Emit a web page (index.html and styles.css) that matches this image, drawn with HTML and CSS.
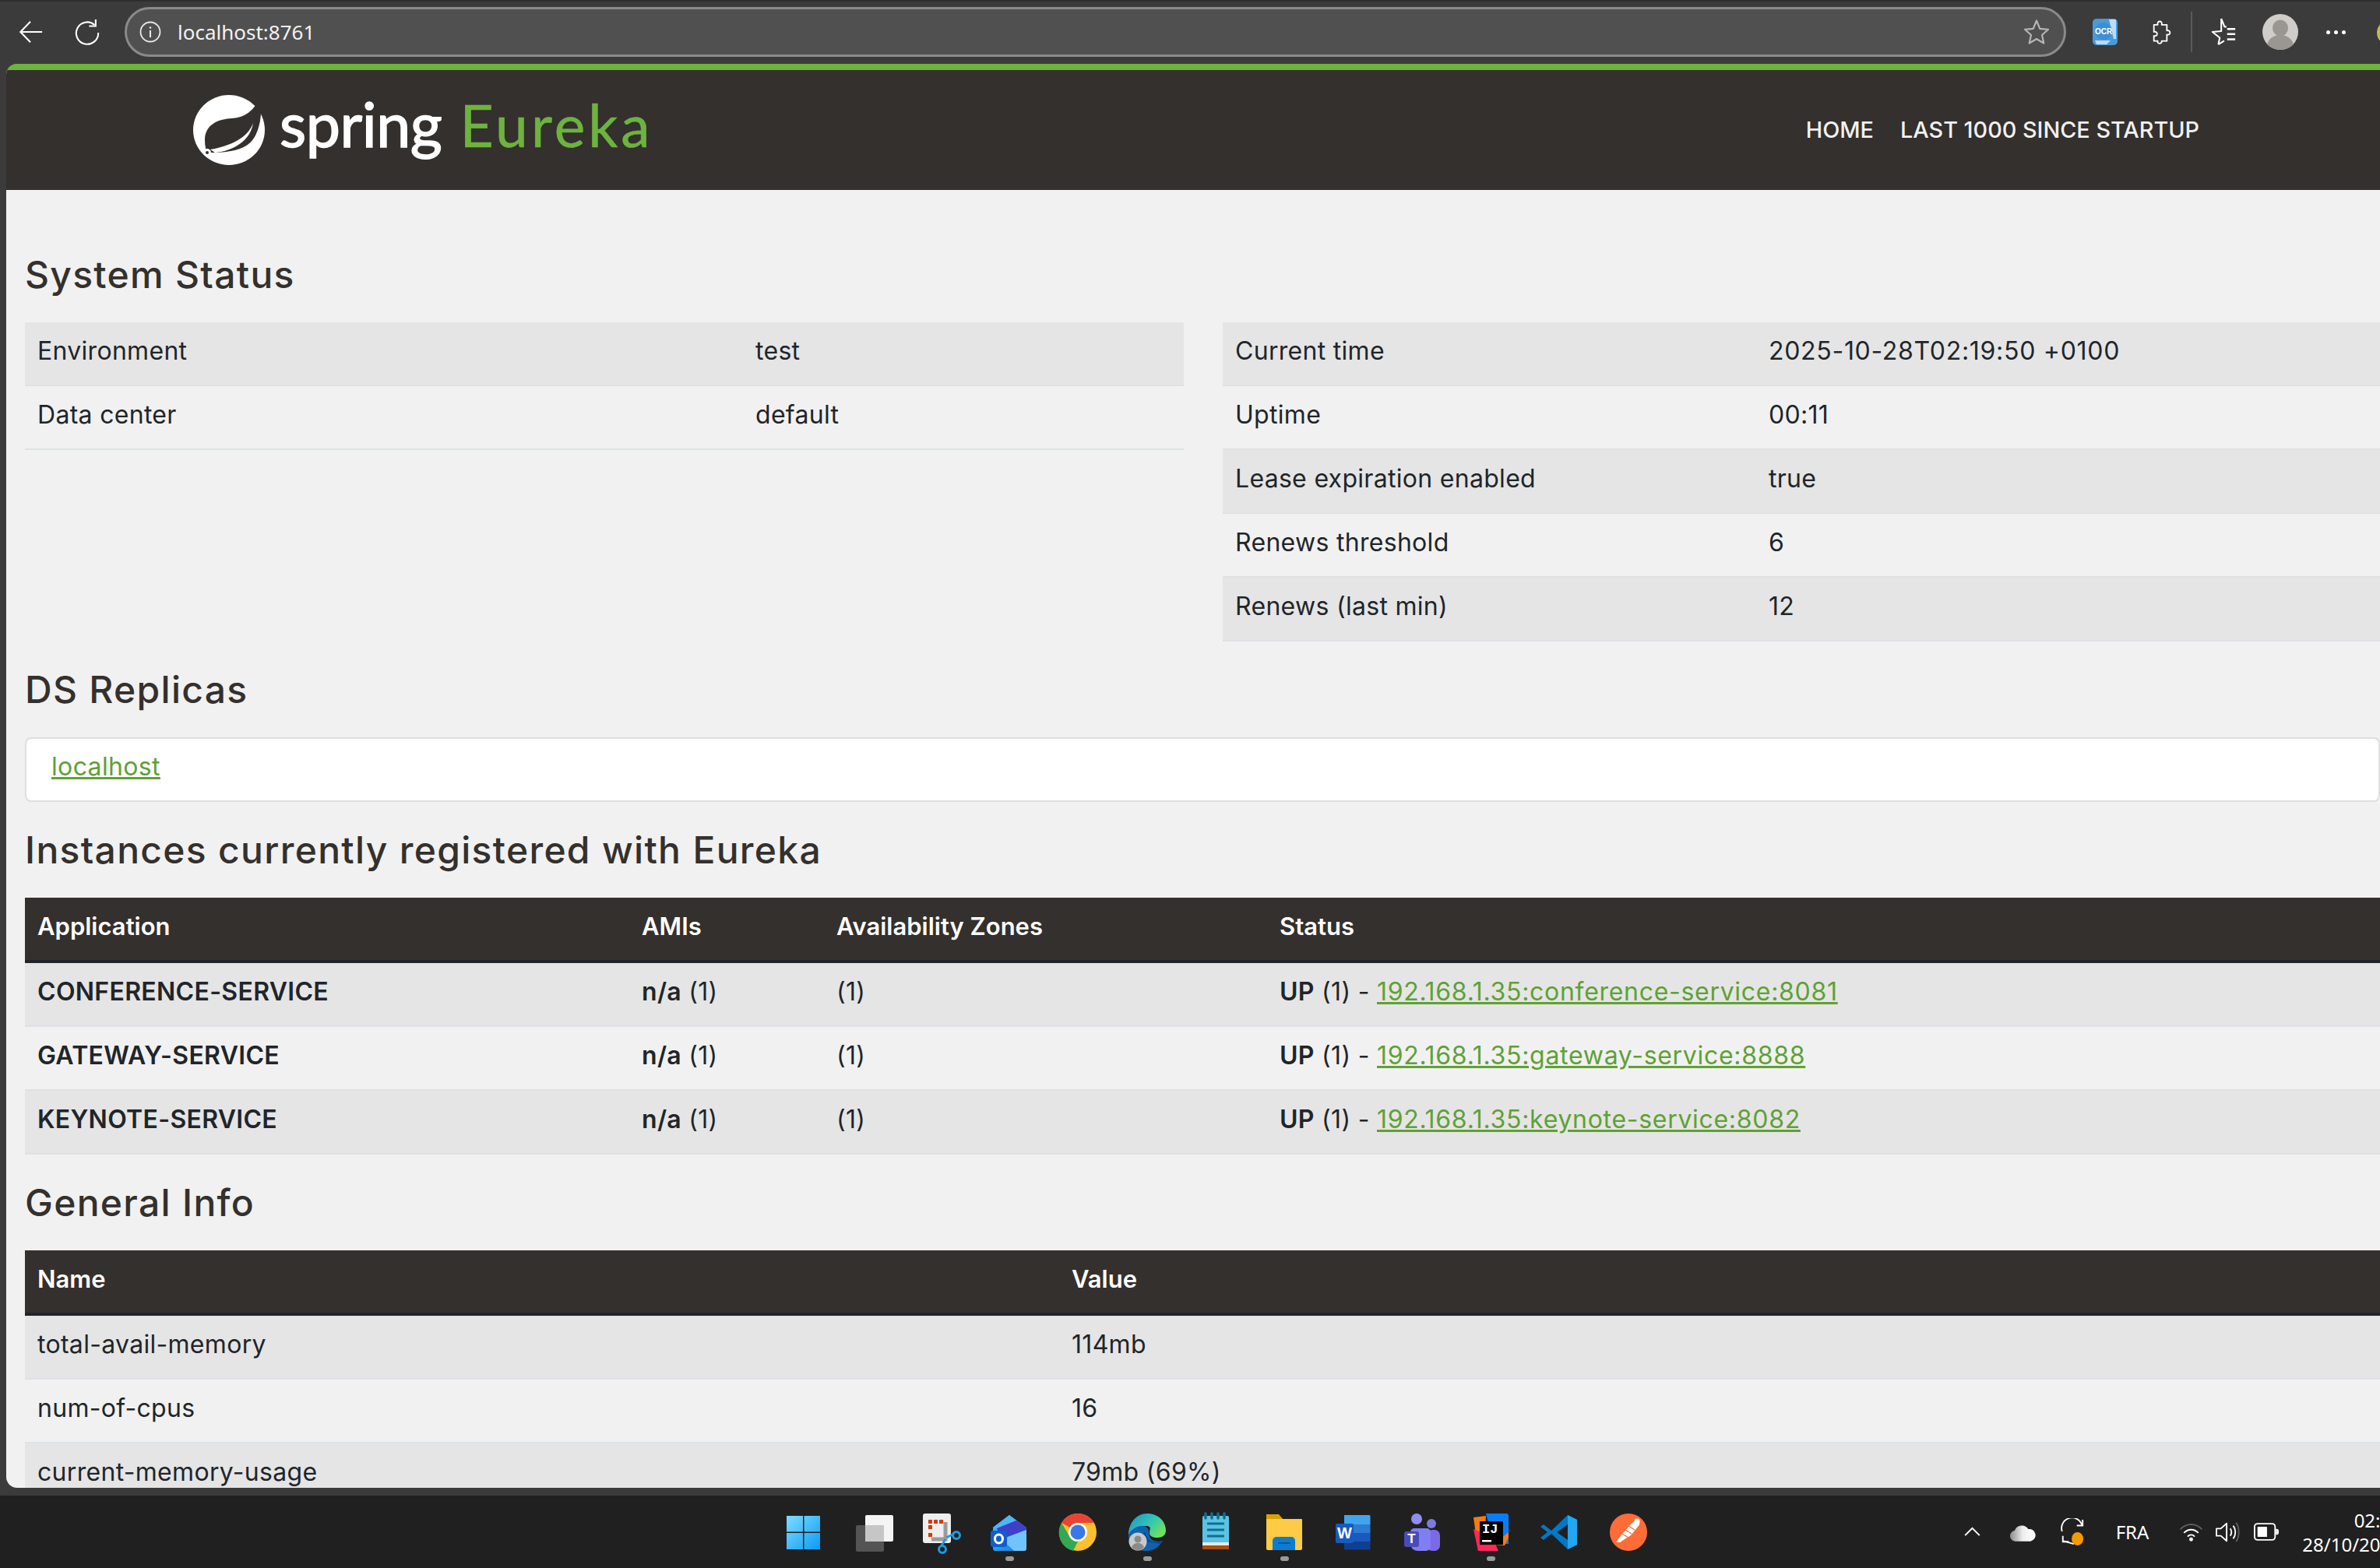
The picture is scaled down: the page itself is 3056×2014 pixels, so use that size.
FILE: index.html
```html
<!DOCTYPE html>
<html lang="fr">
<head>
    <meta charset="UTF-8">
    <meta name="viewport" content="width=device-width, initial-scale=1.0">
    <title>Eureka</title>
    <link rel="stylesheet" href="styles.css">
</head>
<body>

<div class="browser">
    <div class="toolbar">
        <svg class="tool back" viewBox="0 0 36 36"><path d="M33 18H4M17 4 3.500 18 17 32" fill="none" stroke="#fff" stroke-width="2.200"/></svg>
        <svg class="tool reload" viewBox="0 0 36 36"><path d="M28 8.500A15 15 0 1 0 33 19" fill="none" stroke="#fff" stroke-width="2.200"/><path d="M29.500 1v9h-9" fill="none" stroke="#fff" stroke-width="2.200"/></svg>
        <div class="address">
            <svg class="info" viewBox="0 0 28 28"><circle cx="14" cy="14" r="12.500" fill="none" stroke="#e8e8e8" stroke-width="1.800"/><path d="M14 12v9" stroke="#e8e8e8" stroke-width="2"/><circle cx="14" cy="8.500" r="1.300" fill="#e8e8e8"/></svg>
            <span class="url">localhost:8761</span>
            <svg class="star" viewBox="0 0 34 34"><path d="M17 2.500 21.300 12.800 32 13.800 24 21 26.300 31.500 17 26 7.700 31.500 10 21 2 13.800 12.700 12.800Z" fill="none" stroke="#b5b5b5" stroke-width="2.200" stroke-linejoin="round"/></svg>
        </div>
        <div class="ocr"><svg viewBox="0 0 32 34"><rect width="32" height="34" rx="5" fill="#4a9ad8"/><path d="M21 1h9v25h-3ZM3 28h20l-5 5H5Z" fill="#bcdcf2"/><circle cx="14" cy="16" r="11" fill="#3d8fd1"/><text x="14" y="20" class="ocr-text">OCR</text></svg></div>
        <svg class="tool puzzle" viewBox="0 0 36 40"><path d="M8 9h6c-2-7 8-7 6 0h8v9c6-2 7 8 0 6v10h-8c1 5-8 5-6 0H8v-8c3 1 5-1 5-3s-2-4-5-3Z" fill="none" stroke="#fff" stroke-width="2.200" stroke-linejoin="round"/></svg>
        <i class="tool-sep"></i>
        <svg class="tool favs" viewBox="0 0 36 40"><path d="M15 2 19.500 13 22 13M11 37l2-9-10-8 12-1L15 2M11 37l8-5" fill="none" stroke="#fff" stroke-width="2.200" stroke-linejoin="round"/><path d="M23 16h11M23 23h11M23 30h11" stroke="#fff" stroke-width="2.600"/></svg>
        <div class="avatar"><svg viewBox="0 0 46 46"><circle cx="23" cy="23" r="23" fill="#cfcdc9"/><ellipse cx="23" cy="18" rx="10" ry="10.500" fill="#9a9792"/><path d="M6 39c3-9 10-12 17-12s14 3 17 12c-4 4-10 7-17 7S10 43 6 39Z" fill="#9a9792"/></svg></div>
        <div class="dots"><i></i><i></i><i></i></div>
        <div class="copilot"></div>
    </div>

    <div class="page">
        <header class="topbar">
            <a class="logo" href="#">
                <svg class="leaf" viewBox="0 0 92 90">
                    <ellipse cx="46" cy="45" rx="46" ry="45" fill="#fff"/>
                    <path d="M86 3C78 20 67 29 50 30 29 31 15 40 15 58c0 6 1 12 3 16 27 0 52-2 62-22 8-16 8-33 6-49Z" fill="#34302d"/>
                    <path d="M22 70c24-4 48-14 55-34-3 22-25 36-49 38Z" fill="#fff"/>
                    <circle cx="18" cy="74" r="5" fill="#fff"/>
                    <circle cx="18" cy="74" r="2" fill="#34302d"/>
                </svg>
                <span class="logo-spring">spring</span>
                <span class="logo-eureka">Eureka</span>
            </a>
            <nav class="mainnav">
                <a href="#">HOME</a>
                <a href="#">LAST 1000 SINCE STARTUP</a>
            </nav>
        </header>

        <main class="content">
            <h2 class="first">System Status</h2>
            <div class="status-grid">
                <table class="stripe env">
                    <tr><td>Environment</td><td>test</td></tr>
                    <tr><td>Data center</td><td>default</td></tr>
                </table>
                <table class="stripe times">
                    <tr><td>Current time</td><td class="stamp">2025-10-28T02:19:50 +0100</td></tr>
                    <tr><td>Uptime</td><td>00:11</td></tr>
                    <tr><td>Lease expiration enabled</td><td>true</td></tr>
                    <tr><td>Renews threshold</td><td>6</td></tr>
                    <tr><td>Renews (last min)</td><td>12</td></tr>
                </table>
            </div>

            <h2>DS Replicas</h2>
            <div class="replicas"><a href="#">localhost</a></div>

            <h2>Instances currently registered with Eureka</h2>
            <table class="stripe instances">
                <thead>
                    <tr><th>Application</th><th>AMIs</th><th>Availability Zones</th><th>Status</th></tr>
                </thead>
                <tbody>
                    <tr><td><b>CONFERENCE-SERVICE</b></td><td><b>n/a</b> (1)</td><td>(1)</td><td><b>UP</b> (1) - <a href="#">192.168.1.35:conference-service:8081</a></td></tr>
                    <tr><td><b>GATEWAY-SERVICE</b></td><td><b>n/a</b> (1)</td><td>(1)</td><td><b>UP</b> (1) - <a href="#">192.168.1.35:gateway-service:8888</a></td></tr>
                    <tr class="shade"><td><b>KEYNOTE-SERVICE</b></td><td><b>n/a</b> (1)</td><td>(1)</td><td><b>UP</b> (1) - <a href="#">192.168.1.35:keynote-service:8082</a></td></tr>
                </tbody>
            </table>

            <h2>General Info</h2>
            <table class="stripe general">
                <thead>
                    <tr><th>Name</th><th>Value</th></tr>
                </thead>
                <tbody>
                    <tr><td>total-avail-memory</td><td>114mb</td></tr>
                    <tr><td>num-of-cpus</td><td>16</td></tr>
                    <tr><td>current-memory-usage</td><td>79mb (69%)</td></tr>
                </tbody>
            </table>
        </main>
    </div>
</div>

<div class="taskbar">
    <div class="apps">
        <div class="app"><svg viewBox="0 0 48 48"><defs><linearGradient id="win" x1="0" y1="0" x2="1" y2="1"><stop offset="0" stop-color="#7fdcff"/><stop offset="1" stop-color="#0a9bf5"/></linearGradient></defs><path d="M3 3h21v21H3ZM25 3h21v21H25ZM3 25h21v21H3ZM25 25h21v21H25Z" fill="url(#win)"/><path d="M24 2h1.500v45H24ZM2 23.500h45V25H2Z" fill="#202020"/></svg></div>
        <div class="app"><svg viewBox="0 0 48 48"><rect x="16" y="2" width="36" height="34" rx="2" fill="#f4f4f4"/><rect x="4" y="15" width="36" height="34" rx="2" fill="#5a5a5a" opacity=".9"/><rect x="16" y="15" width="24" height="21" fill="#c6c6c6"/></svg></div>
        <div class="app"><svg viewBox="0 0 48 48"><rect x="1" y="0" width="36" height="38" rx="3" fill="#eeeeee"/><path d="M8 8h5v5H8ZM15 8h5v5h-5ZM22 8h5v5h-5ZM8 15h5v5H8ZM8 25h5v5H8Z" fill="#d83b01"/><path d="M30 11v22H12" fill="none" stroke="#9b9b9b" stroke-width="5"/><path d="M31 31 41 26M30 33l-5 8" stroke="#1e9be0" stroke-width="3"/><circle cx="44" cy="28" r="4.500" fill="none" stroke="#1e9be0" stroke-width="3"/><circle cx="26" cy="46" r="4.500" fill="none" stroke="#1e9be0" stroke-width="3"/></svg></div>
        <div class="app has-dot"><svg viewBox="0 0 48 48"><defs><linearGradient id="out" x1="0" y1="0" x2="1" y2="1"><stop offset="0" stop-color="#3cc4ff"/><stop offset="1" stop-color="#1673e0"/></linearGradient></defs><path d="M3 18 24 2l22 16v27a3 3 0 0 1-3 3H6a3 3 0 0 1-3-3Z" fill="url(#out)"/><path d="M24 2l9 7-25 10-5-1Z" fill="#4fb6f7"/><path d="M33 9l13 9v3L14 33l-6-14Z" fill="#3f3fc8"/><path d="M46 21v24a3 3 0 0 1-3 3H30L14 33Z" fill="#70c4fb"/><rect x="0" y="22" width="21" height="21" rx="3" fill="#0f5fcb"/><ellipse cx="10.500" cy="32.500" rx="5" ry="5.500" fill="none" stroke="#fff" stroke-width="3"/></svg></div>
        <div class="app"><svg viewBox="0 0 48 48"><circle cx="24" cy="24" r="24" fill="#fbc02d"/><path d="M24 0a24 24 0 0 1 20.800 12H24a12 12 0 0 0-10.400 6L3.200 12A24 24 0 0 1 24 0Z" fill="#ea4335"/><path d="M3.200 12l10.400 18a12 12 0 0 0 10.400 6l-6 12A24 24 0 0 1 3.200 12Z" fill="#34a853"/><circle cx="24" cy="24" r="12" fill="#fff"/><circle cx="24" cy="24" r="9.500" fill="#3b78e7"/></svg></div>
        <div class="app has-dot"><svg viewBox="0 0 48 48"><defs><linearGradient id="edge" x1="0" y1="0" x2="1" y2=".6"><stop offset="0" stop-color="#1d8fd0"/><stop offset=".6" stop-color="#33c6b0"/><stop offset="1" stop-color="#70df5e"/></linearGradient></defs><path d="M24 0c14 0 24 10 24 22 0 6-5 9-10 9-7 0-11-2-11-6 0-5 3-8-3-9C13 15 2 21 0 28 0 12 10 0 24 0Z" fill="url(#edge)"/><path d="M0 28c3-8 11-12 17-12 6 0 9 3 9 8 0 10 8 14 18 11-5 8-12 13-20 13C10 48 0 40 0 28Z" fill="#0f63ad"/><path d="M22 24c0 9 8 16 22 11l-4 4-24-4 4-11Z" fill="#0a4a8d"/><circle cx="12" cy="36" r="11.500" fill="#c9c9c9"/><circle cx="12" cy="33" r="4.500" fill="#8a8a8a"/><path d="M4 43c2-4 5-5 8-5s6 1 8 5c-2 3-5 4-8 4s-6-1-8-4Z" fill="#8a8a8a"/></svg></div>
        <div class="app"><svg viewBox="0 0 48 48"><rect x="7" y="3" width="34" height="43" rx="2" fill="#5cc3e4"/><rect x="7" y="37" width="34" height="5" fill="#e8e8e8"/><rect x="7" y="41" width="34" height="5" fill="#a8500f"/><path d="M11 0v6M19 0v6M27 0v6M35 0v6" stroke="#0e6f91" stroke-width="3.500" stroke-linecap="round"/><path d="M13 13h22M13 21h22M13 29h22" stroke="#0e6f91" stroke-width="3"/></svg></div>
        <div class="app has-dot"><svg viewBox="0 0 48 48"><path d="M1 1h16l6 7H1Z" fill="#d9a100"/><path d="M1 7h45a1 1 0 0 1 1 1v37a2 2 0 0 1-2 2H3a2 2 0 0 1-2-2Z" fill="#fdcb45"/><path d="M9 47V35a5 5 0 0 1 5-5h19a5 5 0 0 1 5 5v12Z" fill="#0b7dd0"/><path d="M16 38h16" stroke="#0a549b" stroke-width="2"/></svg></div>
        <div class="app"><svg viewBox="0 0 48 48"><path d="M12 2h32a1.500 1.500 0 0 1 1.500 1.500V14H12Z" fill="#41a5ee"/><path d="M12 14h33.500v11H12Z" fill="#2b7cd3"/><path d="M12 25h33.500v11H12Z" fill="#185abd"/><path d="M12 36h33.500v9a1.500 1.500 0 0 1-1.500 1.500H13.500A1.500 1.500 0 0 1 12 45Z" fill="#103f91"/><rect x="1" y="13" width="23" height="25" rx="2" fill="#185abd"/><text x="12.500" y="32" class="word-text">W</text></svg></div>
        <div class="app"><svg viewBox="0 0 48 48"><circle cx="17" cy="7" r="7" fill="#8e8ef0"/><circle cx="36" cy="13" r="6" fill="#7b7be0"/><rect x="30" y="21" width="17" height="27" rx="7" fill="#7b6ae8"/><path d="M9 24a5 5 0 0 1 5-5h16a5 5 0 0 1 5 5v18a6 6 0 0 1-6 6H18A9 9 0 0 1 9 39Z" fill="#7f7ff2"/><rect x="1" y="23" width="19" height="20" rx="3" fill="#4b4bb8"/><text x="10.500" y="38" class="teams-text">T</text></svg></div>
        <div class="app has-dot"><svg viewBox="0 0 48 48"><path d="M2 5l16-2-4 45H8Z" fill="#f97a12"/><path d="M2 20 26 30 34 48H8Z" fill="#fe2857"/><path d="M18 0h26a3 3 0 0 1 3 3v36H28Z" fill="#087cfa"/><path d="M28 40 47 24v7l-5 10Z" fill="#f97a12"/><rect x="10" y="10" width="30" height="30" fill="#000"/><text x="13" y="25" class="ij-text">IJ</text><rect x="13" y="34" width="12" height="2.500" fill="#fff"/></svg></div>
        <div class="app"><svg viewBox="0 0 48 48"><path d="M35 2 47 8v32L35 46 14 26 4 34 0 31l9-7-9-7 4-3 10 8Z" fill="#0078c8"/><path d="M35 2 47 8v32L35 46Z" fill="#22a7f0"/><path d="M35 14 21 24l14 10Z" fill="#202020"/></svg></div>
        <div class="app"><svg viewBox="0 0 48 48"><circle cx="24" cy="24" r="24" fill="#ff6c37"/><path d="M8 37 16 26 27 14c3-3 7-6 10-5 2 1 2 5-1 8L27 28 13 37Z" fill="#fff"/><path d="M16 26l8 5M20 21l8 5M24 16l8 5" stroke="#ff6c37" stroke-width="1.200"/><circle cx="35" cy="10" r="3.500" fill="#fff"/></svg></div>
    </div>
    <div class="tray">
        <div class="tray-item chevron"><svg viewBox="0 0 24 14"><path d="M2 12 12 2l10 10" fill="none" stroke="#fff" stroke-width="2.200"/></svg></div>
        <div class="tray-item cloud"><svg viewBox="0 0 34 24"><defs><linearGradient id="cl" x1="0" y1="0" x2="1" y2="0"><stop offset="0" stop-color="#8b8b8b"/><stop offset=".5" stop-color="#eeeeee"/><stop offset="1" stop-color="#ffffff"/></linearGradient></defs><path d="M8 24a7 7 0 0 1-2-14 10 10 0 0 1 18-2 8 8 0 0 1 3 16Z" fill="url(#cl)"/></svg></div>
        <div class="tray-item sync"><svg viewBox="0 0 34 38"><path d="M30 9A14 14 0 0 0 3 18M5 31l14 4" fill="none" stroke="#fff" stroke-width="2"/><path d="M31 2v8h-8M4 24v8h8" fill="none" stroke="#fff" stroke-width="2"/><ellipse cx="24" cy="28" rx="8" ry="9" fill="#f59b00"/></svg></div>
        <div class="tray-item lang">FRA</div>
        <div class="tray-item wifi"><svg viewBox="0 0 34 28"><path d="M2 10c9-9 21-9 30 0" fill="none" stroke="#5d5d5d" stroke-width="2"/><path d="M7 15c6-6 14-6 20 0" fill="none" stroke="#fff" stroke-width="2"/><path d="M12 20c3-3 7-3 10 0" fill="none" stroke="#fff" stroke-width="2"/><circle cx="17" cy="24" r="2.600" fill="#fff"/></svg></div>
        <div class="tray-item volume"><svg viewBox="0 0 34 30"><path d="M2 10h6l8-7v24l-8-7H2Z" fill="none" stroke="#fff" stroke-width="2" stroke-linejoin="round"/><path d="M21 10c2 3 2 7 0 10M25 6c4 5 4 13 0 18" fill="none" stroke="#fff" stroke-width="2"/><path d="M29 2c5 7 5 19 0 26" fill="none" stroke="#5d5d5d" stroke-width="2"/></svg></div>
        <div class="tray-item battery"><svg viewBox="0 0 34 24"><rect x="1" y="1" width="28" height="22" rx="4" fill="none" stroke="#fff" stroke-width="2"/><rect x="5" y="5" width="13" height="14" rx="1" fill="#fff"/><path d="M30 8h1a3 3 0 0 1 3 3v2a3 3 0 0 1-3 3h-1Z" fill="#fff"/></svg></div>
        <div class="clock"><span>02:19</span><span>28/10/2025</span></div>
    </div>
</div>

</body>
</html>
```

FILE: styles.css
```css
* {
    box-sizing: border-box;
}
html, body {
    margin: 0;
    height: 2014px;
    overflow: hidden;
}
body {
    font-family: Inter, Arial, sans-serif;
    background-color: #3b3b3b;
    color: #212529;
}
a {
    color: #5fa134;
}

/* navigateur */
.browser {
    height: 1921px;
    display: flex;
    flex-direction: column;
    background-color: #3b3b3b;
}
.toolbar {
    height: 82px;
    flex: none;
    display: flex;
    align-items: center;
    position: relative;
    border-top: 2px solid #2e2e2e;
    padding-bottom: 2px;
}
.tool {
    display: block;
    flex: none;
}
.back {
    width: 34px;
    height: 34px;
    margin-left: 23px;
}
.reload {
    width: 34px;
    height: 36px;
    margin-left: 38px;
}
.address {
    width: 2493px;
    height: 64px;
    margin-left: 31px;
    flex: none;
    display: flex;
    align-items: center;
    padding: 0 18px 0 16px;
    border: 3px solid #8a8a8a;
    border-radius: 32px;
    background-color: #505050;
}
.info {
    width: 28px;
    height: 28px;
}
.url {
    margin-left: 21px;
    font-family: "Noto Sans", Arial, sans-serif;
    font-size: 26px;
    color: #f2f2f2;
}
.star {
    width: 34px;
    height: 34px;
    margin-left: auto;
}
.ocr {
    margin-left: 34px;
    width: 32px;
    height: 34px;
}
.ocr svg {
    display: block;
}
.ocr-text {
    font-family: "Liberation Sans", sans-serif;
    font-size: 10px;
    font-weight: bold;
    fill: #fff;
    text-anchor: middle;
}
.puzzle {
    width: 30px;
    height: 40px;
    margin-left: 40px;
}
.tool-sep {
    width: 2px;
    height: 52px;
    margin-left: 24px;
    background-color: #5a5a5a;
}
.favs {
    width: 34px;
    height: 40px;
    margin-left: 23px;
}
.avatar {
    width: 46px;
    height: 46px;
    margin-left: 33px;
}
.avatar svg {
    display: block;
}
.dots {
    margin-left: 36px;
    display: flex;
    gap: 5px;
}
.dots i {
    width: 5px;
    height: 5px;
    border-radius: 50%;
    background-color: #fff;
}
.copilot {
    position: absolute;
    left: 3052px;
    top: 24px;
    width: 32px;
    height: 32px;
    border-radius: 50%;
    border: 5px solid #c7b84a;
}

/* page */
.page {
    flex: 1;
    min-height: 0;
    margin: 0 0 10px 8px;
    overflow: hidden;
    background-color: #f1f1f1;
    border-radius: 14px 0 0 14px;
}
.topbar {
    height: 162px;
    display: flex;
    align-items: center;
    justify-content: space-between;
    border-top: 8px solid #6db33f;
    padding: 0 232px 0 240px;
    background-color: #34302d;
}
.logo {
    display: flex;
    align-items: baseline;
    text-decoration: none;
    font-family: Lato, sans-serif;
    height: 90px;
}
.leaf {
    width: 92px;
    height: 90px;
    flex: none;
    align-self: center;
}
.logo-spring {
    margin-left: 19px;
    font-size: 79px;
    line-height: 74px;
    letter-spacing: -.5px;
    color: #fff;
    -webkit-text-stroke: 1.5px #fff;
}
.logo-eureka {
    margin-left: 23px;
    font-size: 75px;
    line-height: 74px;
    letter-spacing: 4px;
    color: #6db33f;
    -webkit-text-stroke: .6px #6db33f;
}
.mainnav {
    display: flex;
    gap: 34px;
    padding-bottom: 2px;
    font-family: Inter, sans-serif;
    font-size: 28.8px;
    font-weight: 500;
}
.mainnav a {
    color: #f1f1f1;
    text-decoration: none;
}
.content {
    padding-left: 24px;
}
h2 {
    margin: 38px 0 37px;
    font-size: 48px;
    line-height: 48px;
    letter-spacing: 1.3px;
    font-weight: 500;
    color: #34302d;
}
h2.first {
    margin-top: 85px;
}
.status-grid {
    display: grid;
    grid-template-columns: 1488fr 1486fr;
    gap: 50px;
    align-items: start;
}
table {
    width: 100%;
    border-collapse: collapse;
    table-layout: fixed;
    font-size: 32px;
    letter-spacing: .3px;
}
th, td {
    padding: 13px 16px 19px;
    line-height: 48px;
    text-align: left;
    white-space: nowrap;
}
td {
    border-bottom: 2px solid #dee2e6;
}
td a, .stamp {
    letter-spacing: .7px;
}
th {
    background-color: #34302d;
    color: #fff;
    font-size: 31px;
    letter-spacing: 0;
    font-weight: 600;
    border-bottom: 4px solid #212529;
}
td b {
    font-weight: 600;
}
.stripe tr:nth-child(odd) td {
    background-color: #e5e5e5;
}
.stripe tr.shade td {
    background-color: #e5e5e5;
}
.env td:first-child {
    width: 922px;
}
.times td:first-child {
    width: 685px;
}
.instances th:nth-child(1) {
    width: 776px;
}
.instances th:nth-child(2) {
    width: 250px;
}
.instances th:nth-child(3) {
    width: 569px;
}
.general th:first-child {
    width: 1328px;
}
.replicas {
    height: 83px;
    padding: 12px 32px;
    line-height: 48px;
    font-size: 32px;
    letter-spacing: .35px;
    background-color: #fff;
    border: 2px solid #dfdfdf;
    border-radius: 8px;
}

/* barre des taches */
.taskbar {
    height: 93px;
    display: flex;
    align-items: center;
    background-color: #202020;
}
.apps {
    display: flex;
    padding-left: 987px;
    flex: none;
}
.app {
    width: 88.3px;
    height: 48px;
    display: flex;
    justify-content: center;
    position: relative;
}
.app svg {
    width: 48px;
    height: 48px;
    display: block;
    overflow: visible;
}
.has-dot::after {
    content: "";
    position: absolute;
    left: 50%;
    top: 55px;
    width: 11px;
    height: 6px;
    margin-left: -5px;
    border-radius: 3px;
    background-color: #9a9a9a;
}
.word-text, .teams-text, .ij-text {
    font-family: "Liberation Sans", sans-serif;
    font-weight: bold;
    fill: #fff;
}
.word-text {
    font-size: 20px;
    text-anchor: middle;
}
.teams-text {
    font-size: 17px;
    text-anchor: middle;
}
.ij-text {
    font-family: "Liberation Mono", monospace;
    font-size: 17px;
}
.tray {
    margin-left: auto;
    width: 556px;
    flex: none;
    display: flex;
    align-items: center;
    color: #fff;
}
.tray-item {
    display: flex;
    justify-content: center;
    align-items: center;
    flex: none;
}
.tray-item svg {
    display: block;
}
.chevron {
    width: 65px;
}
.chevron svg {
    width: 23px;
    height: 13px;
}
.cloud {
    width: 64px;
}
.cloud svg {
    width: 33px;
    height: 24px;
}
.sync {
    width: 64px;
}
.sync svg {
    width: 32px;
    height: 36px;
}
.lang {
    width: 90px;
    font-family: "Noto Sans", sans-serif;
    font-size: 24px;
}
.wifi {
    width: 60px;
}
.wifi svg {
    width: 33px;
    height: 26px;
}
.volume {
    width: 34px;
}
.volume svg {
    width: 32px;
    height: 28px;
}
.battery {
    width: 66px;
}
.battery svg {
    width: 32px;
    height: 23px;
}
.clock {
    flex: none;
    width: 141px;
    display: flex;
    flex-direction: column;
    align-items: flex-end;
    font-family: "Noto Sans", sans-serif;
    font-size: 24px;
    line-height: 31px;
}
```
